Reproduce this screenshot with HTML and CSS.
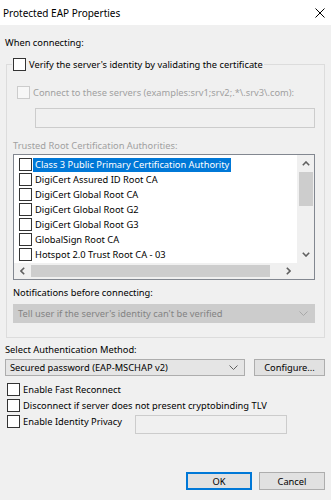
FILE: index.html
```html
<!DOCTYPE html>
<html lang="en">
  <head>
    <meta charset="UTF-8" />
    <meta name="viewport" content="width=device-width, initial-scale=1.0" />
    <title>Protected EAP Properties</title>
    <link rel="stylesheet" href="styles.css">
  </head>
  <body>
    <div class="titlebar">
      <span class="title">Protected EAP Properties</span>
      <svg class="close" viewBox="0 0 10 10"><path d="M0.5 0.5L9.5 9.5M9.5 0.5L0.5 9.5" stroke="#000" stroke-width="1" /></svg>
    </div>

    <div class="dialog">
      <p class="label">When connecting:</p>

      <fieldset class="group">
        <legend>
          <label class="check"><input type="checkbox" />Verify the server's identity by validating the certificate</label>
        </legend>

        <label class="check connect muted"><input type="checkbox" disabled />Connect to these servers (examples:srv1;srv2;.*\.srv3\.com):</label>
        <input class="field servers" type="text" disabled />

        <p class="label muted trusted">Trusted Root Certification Authorities:</p>
        <div class="listbox">
          <ul class="items">
            <li class="selected"><input type="checkbox" /><span>Class 3 Public Primary Certification Authority</span></li>
            <li><input type="checkbox" /><span>DigiCert Assured ID Root CA</span></li>
            <li><input type="checkbox" /><span>DigiCert Global Root CA</span></li>
            <li><input type="checkbox" /><span>DigiCert Global Root G2</span></li>
            <li><input type="checkbox" /><span>DigiCert Global Root G3</span></li>
            <li><input type="checkbox" /><span>GlobalSign Root CA</span></li>
            <li><input type="checkbox" /><span>Hotspot 2.0 Trust Root CA - 03</span></li>
          </ul>
          <div class="vscroll">
            <div class="arrow"><svg viewBox="0 0 8 5"><path d="M0.8 4.2L4 1L7.2 4.2" /></svg></div>
            <div class="thumb"></div>
            <div class="arrow down"><svg viewBox="0 0 8 5"><path d="M0.8 0.8L4 4L7.2 0.8" /></svg></div>
          </div>
          <div class="hscroll">
            <div class="arrow"><svg viewBox="0 0 5 8"><path d="M4.2 0.8L1 4L4.2 7.2" /></svg></div>
            <div class="thumb"></div>
            <div class="arrow right"><svg viewBox="0 0 5 8"><path d="M0.8 0.8L4 4L0.8 7.2" /></svg></div>
          </div>
          <div class="corner"></div>
        </div>

        <p class="label notify">Notifications before connecting:</p>
        <div class="select disabled">
          <span>Tell user if the server's identity can't be verified</span>
          <svg class="chevron" viewBox="0 0 9 5"><path d="M0.5 0.5L4.5 4.5L8.5 0.5" /></svg>
        </div>
      </fieldset>

      <p class="label method-label">Select Authentication Method:</p>
      <div class="method-row">
        <div class="select method">
          <span>Secured password (EAP-MSCHAP v2)</span>
          <svg class="chevron" viewBox="0 0 9 5"><path d="M0.5 0.5L4.5 4.5L8.5 0.5" /></svg>
        </div>
        <button class="configure">Configure...</button>
      </div>

      <div class="options">
        <label class="check"><input type="checkbox" />Enable Fast Reconnect</label>
        <label class="check"><input type="checkbox" />Disconnect if server does not present cryptobinding TLV</label>
        <div class="privacy-row">
          <label class="check"><input type="checkbox" />Enable Identity Privacy</label>
          <input class="field identity" type="text" disabled />
        </div>
      </div>

      <div class="actions">
        <button class="default">OK</button>
        <button>Cancel</button>
      </div>
    </div>
  </body>
</html>
```

FILE: styles.css
```css
body {
  margin: 0;
  background-color: #f0f0f0;
  font-family: "Segoe UI", "Noto Sans", sans-serif;
  font-size: 9.3px;
  color: #000;
}
.titlebar {
  height: 25px;
  background-color: #ffffff;
  display: flex;
  align-items: center;
  justify-content: space-between;
  padding: 0 6px 0 3px;
  font-size: 10px;
}
.close {
  width: 10px;
  height: 10px;
}
.dialog {
  padding: 10px 6px 0 5px;
}
.label {
  margin: 0;
  line-height: 15px;
}
.muted {
  color: #a0a0a0;
}

/* checkboxes */
.check {
  display: flex;
  align-items: center;
  height: 15px;
  white-space: nowrap;
}
input[type="checkbox"] {
  appearance: none;
  width: 13px;
  height: 13px;
  margin: 0 3px 0 0;
  border: 1px solid #333333;
  background-color: #ffffff;
  flex: none;
}
input[type="checkbox"]:disabled {
  border-color: #cccccc;
  background-color: #f7f7f7;
}

/* group box */
.group {
  margin: 7px 0 0 1px;
  padding: 13px 9px 14px 6px;
  border: 1px solid #dcdcdc;
  min-width: 0;
}
.group legend {
  padding: 0 1px;
  margin-left: -1px;
}
.connect {
  margin-left: 4px;
}
.field {
  display: block;
  box-sizing: border-box;
  height: 20px;
  border: 1px solid #cccccc;
  background-color: #f0f0f0;
}
.servers {
  margin: 8px 0 0 22px;
  width: calc(100% - 22px);
}
.trusted {
  margin-top: 10px;
}

/* certificate list */
.listbox {
  margin-top: 1px;
  display: grid;
  grid-template-columns: 1fr 17px;
  grid-template-rows: 108px 16px;
  border: 1px solid #828790;
  background-color: #ffffff;
}
.items {
  list-style: none;
  margin: 0;
  padding: 2px 0 0 5px;
  overflow: hidden;
}
.items li {
  display: flex;
  align-items: center;
  height: 15px;
  white-space: nowrap;
}
.items li input {
  margin-right: 1px;
}
.items li span {
  padding: 0 2px;
  line-height: 14px;
}
.items li.selected span {
  background-color: #0078d7;
  color: #ffffff;
}
.vscroll,
.hscroll,
.corner {
  background-color: #f0f0f0;
}
.vscroll {
  display: flex;
  flex-direction: column;
}
.hscroll {
  display: flex;
}
.arrow {
  display: flex;
  align-items: center;
  justify-content: center;
  width: 17px;
  height: 17px;
}
.hscroll .arrow {
  height: 16px;
}
.arrow svg {
  width: 8px;
  height: 5px;
  fill: none;
  stroke: #606060;
  stroke-width: 1.6;
}
.hscroll .arrow svg {
  width: 5px;
  height: 8px;
}
.arrow.down,
.arrow.right {
  margin-top: auto;
  margin-left: auto;
}
.vscroll .thumb {
  height: 34px;
  margin: 0 1px 0 2px;
  background-color: #cdcdcd;
}
.hscroll .thumb {
  width: 239px;
  margin: 2px 0;
  background-color: #cdcdcd;
}

/* combo boxes */
.notify {
  margin-top: 5px;
}
.select {
  display: flex;
  align-items: center;
  justify-content: space-between;
  box-sizing: border-box;
  height: 19px;
  padding: 0 6px 0 4px;
  border: 1px solid #adadad;
  background-color: #e5e5e5;
}
.select.disabled {
  margin-top: 4px;
  border-color: #cccccc;
  background-color: #cccccc;
  color: #838383;
}
.chevron {
  width: 9px;
  height: 5px;
  fill: none;
  stroke: #606060;
  stroke-width: 1;
}
.select.disabled .chevron {
  stroke: #a8a8a8;
}
.method-label {
  margin-top: 4px;
}
.method-row {
  display: flex;
  gap: 9px;
  margin-top: 2px;
}
.method {
  width: 240px;
  height: 17px;
}

button {
  box-sizing: border-box;
  height: 17px;
  padding: 0;
  font-family: inherit;
  font-size: 9.3px;
  color: #000;
  border: 1px solid #adadad;
  background-color: #e1e1e1;
}
.configure {
  flex: 1;
}

/* options */
.options {
  margin-top: 5px;
}
.options .check {
  height: 16px;
}
.options input[type="checkbox"] {
  margin-left: 2px;
}
.privacy-row {
  display: flex;
  align-items: flex-start;
}
.identity {
  margin: 2px 0 0 auto;
  margin-right: 38px;
  width: 152px;
  height: 19px;
}

.actions {
  display: flex;
  justify-content: flex-end;
  gap: 7px;
  margin-top: 38px;
}
.actions button {
  width: 66px;
  height: 18px;
}
.actions .default {
  border: 2px solid #0078d7;
}
```
